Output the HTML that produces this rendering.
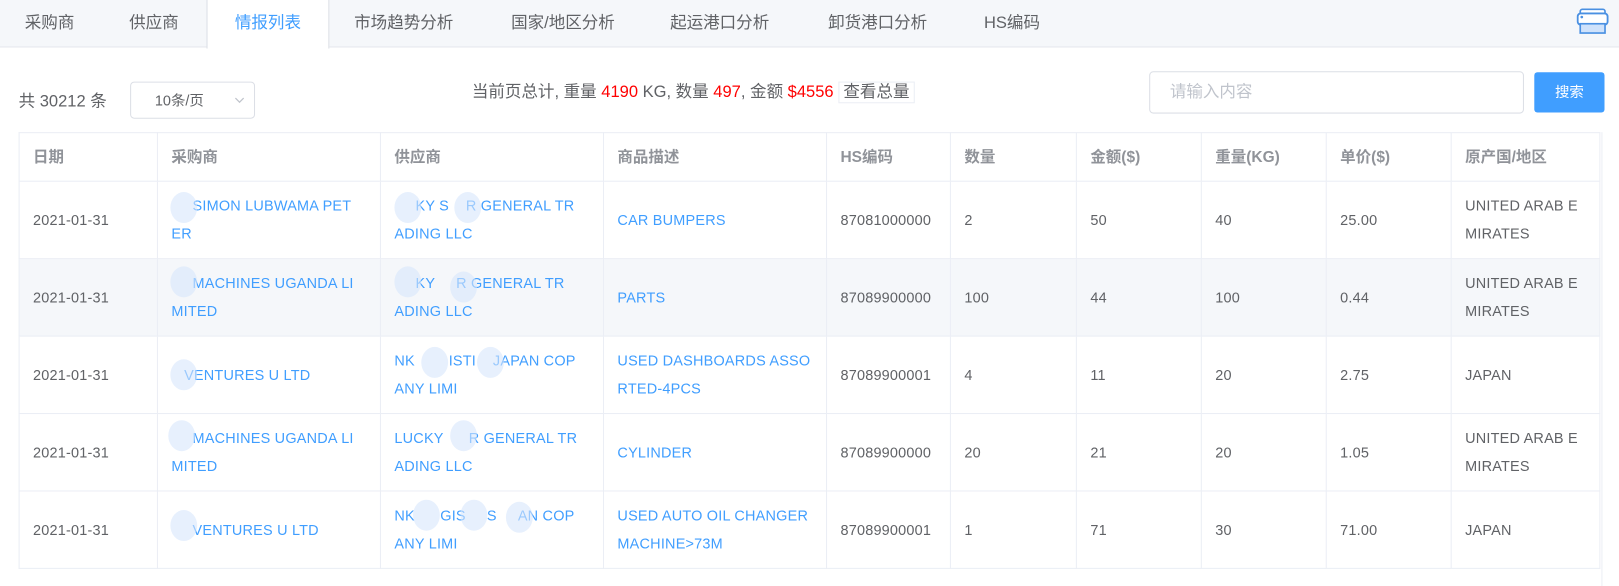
<!DOCTYPE html>
<html><head><meta charset="utf-8"><style>
*{box-sizing:border-box;margin:0;padding:0}
html,body{width:1619px;height:568px;overflow:hidden;background:#fff}
#w{position:absolute;left:0;top:0;width:1568px;height:551px;transform:scale(1.0325);transform-origin:0 0;font-family:"Liberation Sans","Noto Sans CJK SC",sans-serif;color:#606266}
.tabs{position:absolute;left:0;top:0;width:1568px;height:46px;background:#f5f7fa;border-bottom:1px solid #e4e7ed}
.tab{position:absolute;top:0;height:46px;line-height:45px;font-size:16px;color:#606266}
.tab.act{background:#fff;color:#409eff;border-left:1px solid #dcdfe6;border-right:1px solid #dcdfe6;height:47px;text-align:center}
.abs{position:absolute}
table{position:absolute;left:18px;top:128px;border-collapse:collapse;table-layout:fixed;width:1531px;font-size:14px}
td,th{border:1px solid #ebeef5;padding:0 0 0 13px;text-align:left;vertical-align:middle;line-height:27px}
th{height:47px;font-weight:bold;color:#909399;font-size:15px}
td{height:75px;color:#606266;letter-spacing:.2px}
td.l{color:#409eff}
tr.g td{background:#f5f7fa}
.blob{position:absolute;border-radius:50%;background:rgba(215,230,252,.6);width:26px;height:30px}
</style></head><body><div id="w">
<div class="tabs">
<div class="tab" style="left:24px">采购商</div>
<div class="tab" style="left:125px">供应商</div>
<div class="tab act" style="left:200px;width:119px">情报列表</div>
<div class="tab" style="left:343px">市场趋势分析</div>
<div class="tab" style="left:495px">国家/地区分析</div>
<div class="tab" style="left:649px">起运港口分析</div>
<div class="tab" style="left:802px">卸货港口分析</div>
<div class="tab" style="left:953px">HS编码</div>
<svg class="abs" style="left:1527px;top:8px" width="31" height="26" viewBox="0 0 31 26"><rect x="3.5" y="1" width="24" height="6" rx="2" fill="#fff" stroke="#4a90e2" stroke-width="1.6"/><rect x="1" y="5" width="29" height="11" rx="3" fill="#fff" stroke="#4a90e2" stroke-width="1.8"/><circle cx="5" cy="8.5" r="1.3" fill="#4a90e2"/><rect x="3.5" y="15" width="24" height="9" fill="#cfe2fb" stroke="#4a90e2" stroke-width="1.6"/></svg>
</div>
<div class="abs" style="left:18px;top:84px;font-size:16px;color:#606266">共 30212 条</div>
<div class="abs" style="left:126px;top:79px;width:121px;height:36px;border:1px solid #dcdfe6;border-radius:4px;font-size:14px;line-height:34px;padding-left:23px">10条/页<svg class="abs" style="left:100px;top:14px" width="10" height="7" viewBox="0 0 10 7"><path d="M1 1l4 4 4-4" fill="none" stroke="#c0c4cc" stroke-width="1.2"/></svg></div>
<div class="abs" style="left:457px;top:80px;font-size:16px;line-height:20px;color:#606266">当前页总计, 重量 <span style="color:#f00">4190</span> KG, 数量 <span style="color:#f00">497</span>, 金额 <span style="color:#f00">$4556</span> <span style="border:1px solid #ebeef5;padding:1px 4px">查看总量</span></div>
<div class="abs" style="left:1113px;top:69px;width:363px;height:41px;border:1px solid #dcdfe6;border-radius:4px;font-size:16px;line-height:39px;padding-left:19px;color:#c0c4cc">请输入内容</div>
<div class="abs" style="left:1486px;top:70px;width:68px;height:39px;background:#409eff;border-radius:3px;color:#fff;font-size:14px;line-height:39px;text-align:center">搜索</div>
<table>
<colgroup><col style="width:134px"><col style="width:216px"><col style="width:216px"><col style="width:216px"><col style="width:120px"><col style="width:122px"><col style="width:121px"><col style="width:121px"><col style="width:121px"><col style="width:144px"></colgroup>
<tr><th>日期</th><th>采购商</th><th>供应商</th><th>商品描述</th><th>HS编码</th><th>数量</th><th>金额($)</th><th>重量(KG)</th><th>单价($)</th><th>原产国/地区</th></tr>
<tr><td>2021-01-31</td><td class="l">&nbsp;&nbsp;&nbsp;&nbsp;&nbsp;SIMON LUBWAMA PET<br>ER</td><td class="l">&nbsp;&nbsp;&nbsp;&nbsp;&nbsp;KY S&nbsp;&nbsp;&nbsp;&nbsp;R GENERAL TR<br>ADING LLC</td><td class="l">CAR BUMPERS</td><td>87081000000</td><td>2</td><td>50</td><td>40</td><td>25.00</td><td>UNITED ARAB E<br>MIRATES</td></tr>
<tr class="g"><td>2021-01-31</td><td class="l">&nbsp;&nbsp;&nbsp;&nbsp;&nbsp;MACHINES UGANDA LI<br>MITED</td><td class="l">&nbsp;&nbsp;&nbsp;&nbsp;&nbsp;KY &nbsp;&nbsp;&nbsp;&nbsp;R GENERAL TR<br>ADING LLC</td><td class="l">PARTS</td><td>87089900000</td><td>100</td><td>44</td><td>100</td><td>0.44</td><td>UNITED ARAB E<br>MIRATES</td></tr>
<tr><td>2021-01-31</td><td class="l">&nbsp;&nbsp;&nbsp;VENTURES U LTD</td><td class="l">NK &nbsp;&nbsp;&nbsp;&nbsp;&nbsp;&nbsp;&nbsp;ISTI&nbsp;&nbsp;&nbsp;&nbsp;JAPAN COP<br>ANY LIMI</td><td class="l">USED DASHBOARDS ASSO<br>RTED-4PCS</td><td>87089900001</td><td>4</td><td>11</td><td>20</td><td>2.75</td><td>JAPAN</td></tr>
<tr><td>2021-01-31</td><td class="l">&nbsp;&nbsp;&nbsp;&nbsp;&nbsp;MACHINES UGANDA LI<br>MITED</td><td class="l">LUCKY &nbsp;&nbsp;&nbsp;&nbsp;&nbsp;R GENERAL TR<br>ADING LLC</td><td class="l">CYLINDER</td><td>87089900000</td><td>20</td><td>21</td><td>20</td><td>1.05</td><td>UNITED ARAB E<br>MIRATES</td></tr>
<tr><td>2021-01-31</td><td class="l">&nbsp;&nbsp;&nbsp;&nbsp;&nbsp;VENTURES U LTD</td><td class="l">NK&nbsp;&nbsp;&nbsp;&nbsp;&nbsp;&nbsp;GIS&nbsp;&nbsp;&nbsp;&nbsp;&nbsp;S&nbsp;&nbsp;&nbsp;&nbsp;&nbsp;AN COP<br>ANY LIMI</td><td class="l">USED AUTO OIL CHANGER<br>MACHINE&gt;73M</td><td>87089900001</td><td>1</td><td>71</td><td>30</td><td>71.00</td><td>JAPAN</td></tr>
</table>
<div class="abs" style="left:1551px;top:128px;width:1px;height:440px;background:#ebeef5"></div>
<div class="blob" style="left:165px;top:186px"></div><div class="blob" style="left:382px;top:186px"></div><div class="blob" style="left:440px;top:186px"></div>
<div class="blob" style="left:165px;top:258px"></div><div class="blob" style="left:382px;top:258px"></div><div class="blob" style="left:436px;top:263px"></div>
<div class="blob" style="left:165px;top:348px"></div><div class="blob" style="left:408px;top:336px"></div><div class="blob" style="left:462px;top:336px"></div>
<div class="blob" style="left:163px;top:407px"></div><div class="blob" style="left:436px;top:407px"></div>
<div class="blob" style="left:165px;top:494px"></div><div class="blob" style="left:400px;top:484px"></div><div class="blob" style="left:446px;top:484px"></div><div class="blob" style="left:490px;top:486px"></div>
</div></body></html>
